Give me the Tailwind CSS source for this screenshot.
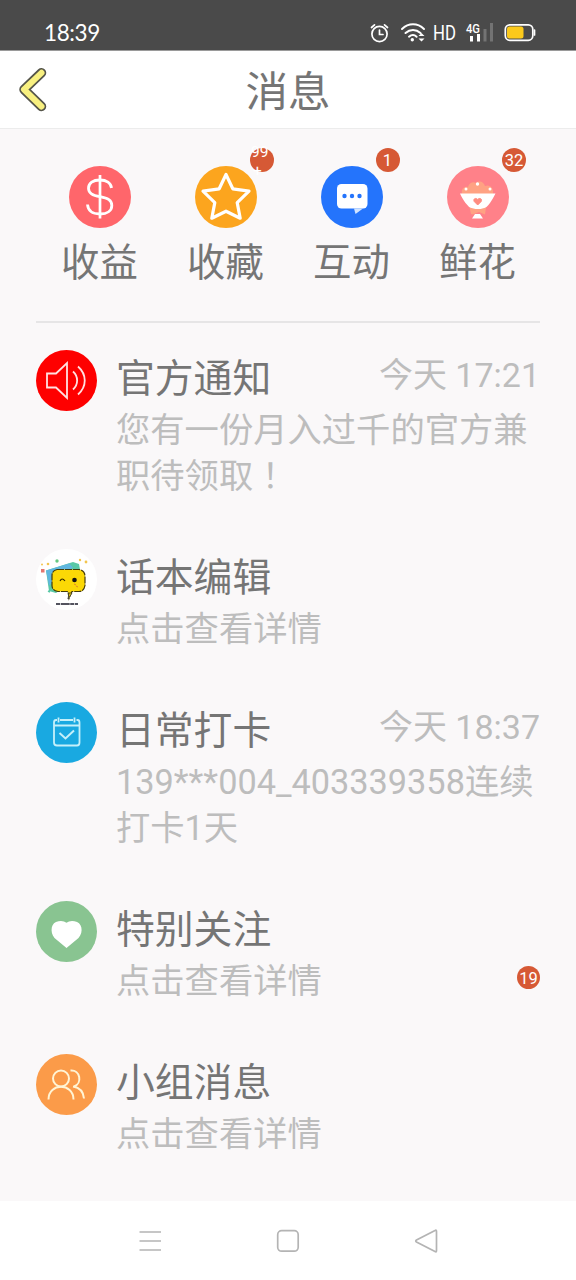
<!DOCTYPE html>
<html lang="zh-CN">
<head>
<meta charset="utf-8">
<meta name="viewport" content="width=device-width, initial-scale=1">
<title>消息</title>
<script src="https://cdn.jsdelivr.net/npm/@tailwindcss/browser@4"></script>
</head>
<body class="w-[576px] h-[1280px] overflow-hidden bg-[#faf8f9] font-['Roboto','Noto_Sans_CJK_SC',sans-serif] text-[#757575]">
<div class="flex h-[1280px] flex-col">

  <!-- Status bar -->
  <header class="flex h-[51px] shrink-0 items-end justify-between border-b border-[#9a9a9a] bg-[#4a4a4a] pl-[44px] pr-[40px] pb-[4px] text-white">
    <div class="font-['Lato','Roboto',sans-serif] text-[22.500px] leading-[26px] tracking-[-0.4px]">18:39</div>
    <svg class="h-[26px] w-[168px]" viewBox="368 20 168 26" fill="none" stroke="#fff" stroke-width="1.7" stroke-linecap="round">
      <circle cx="379.500" cy="34" r="7.600"/>
      <path d="M379.500 30v4.500h3.500M371.500 27.500l3-2.700M387.500 27.500l-3-2.700"/>
      <path d="M402 29c6.500-6.200 15.500-6.200 22 0M405.500 33c4.500-4 10.500-4 15 0M409 36.700c2.400-2 5.500-2 7.600 0" stroke-width="2"/>
      <circle cx="412.300" cy="39.700" r="1.700" fill="#fff" stroke="none"/>
      <path d="M418.500 36l3-3 3 3zM418.500 38.500l3 3 3-3z" fill="#fff" stroke="none"/>
      <text x="433" y="40" fill="#fff" stroke="none" font-family="Roboto" font-size="19.500" textLength="23" lengthAdjust="spacingAndGlyphs">HD</text>
      <text x="466" y="33" fill="#fff" stroke="none" font-family="Roboto" font-weight="500" font-size="12.500" textLength="14" lengthAdjust="spacingAndGlyphs">4G</text>
      <g fill="#fff" stroke="none">
        <rect x="470" y="36" width="3" height="5.500"/><rect x="477" y="34" width="3" height="7.500"/>
        <rect x="483.500" y="29" width="3" height="12.500" fill="#737373"/><rect x="490" y="23" width="3" height="18.500" fill="#737373"/>
      </g>
      <rect x="505.300" y="24.800" width="27.500" height="15.500" rx="4.500"/>
      <path d="M534.500 30v5"/>
      <rect x="507" y="26.500" width="16.500" height="12" rx="2.500" fill="#fbc91b" stroke="none"/>
    </svg>
  </header>

  <!-- Title bar -->
  <div class="grid h-[78px] shrink-0 grid-cols-[1fr_auto_1fr] items-center border-b border-[#ececec] bg-white">
    <svg class="ml-[18px] h-[46px] w-[30px]" viewBox="18 67 30 46" fill="none" stroke-linecap="round" stroke-linejoin="round">
      <path d="M41.500 72.800L24 89.500l17.500 17" stroke="#55554a" stroke-width="9.500"/>
      <path d="M41.500 72.800L24 89.500l17.500 17" stroke="#f8f080" stroke-width="6"/>
    </svg>
    <h1 class="pt-[7px] text-[42.500px] leading-[60px]">消息</h1>
  </div>

  <!-- Shortcuts and conversations -->
  <main class="flex grow flex-col px-9">
    <nav class="flex h-[194px] shrink-0 border-b-2 border-[#e6e5e6] pt-[37px] pl-[0.5px]">
      <div class="flex w-[126px] shrink-0 flex-col items-center">
        <svg class="size-[62px]" viewBox="0 0 62 62" fill="none" stroke="#fff"><circle cx="31" cy="31" r="31" fill="#ff666b" stroke="none"/><path d="M31 9v43.500" stroke-width="2.700"/><path d="M42.500 22c-.5-5-5-8-11.500-8-7 0-11.500 3-11.500 8.300 0 5 4 6.900 11.500 8.400 8 1.600 11.800 3.500 11.800 8.800 0 5.200-4.500 8.500-11.800 8.500-7.500 0-12-3.500-12.500-9.500" stroke-width="2.800"/></svg>
        <div class="mt-[7px] text-[38.400px] leading-[56px]">收益</div>
      </div>
      <div class="flex w-[126px] shrink-0 flex-col items-center">
        <div class="relative">
          <svg class="size-[62px]" viewBox="0 0 62 62"><circle cx="31" cy="31" r="31" fill="#fca51e"/><path d="M31 8.500l6.800 14.300 16.200 2.300-11.800 11.500 3 15.600L31 45.200l-14.200 7 3-15.600L8 25.100l16.200-2.300z" fill="none" stroke="#fff" stroke-width="3.200" stroke-linejoin="round"/></svg>
          <span class="absolute -top-[18px] left-[55.500px] size-6 rounded-full bg-[#d65935] text-[15.500px] leading-[19px] text-white"><span class="-mt-[5px] ml-px block">99<br><span class="ml-0.5">+</span></span></span>
        </div>
        <div class="mt-[7px] text-[38.400px] leading-[56px]">收藏</div>
      </div>
      <div class="flex w-[126px] shrink-0 flex-col items-center">
        <div class="relative">
          <svg class="size-[62px]" viewBox="0 0 62 62"><circle cx="31" cy="31" r="31" fill="#2474fc"/><rect x="16" y="18" width="30.500" height="24.500" rx="4.500" fill="#fff"/><path d="M33 42.500h9l-7.500 5.500z" fill="#d1e4ff"/><g fill="#2474fc"><circle cx="23.500" cy="30" r="2.200"/><circle cx="31" cy="30" r="2.200"/><circle cx="38.500" cy="30" r="2.200"/></g></svg>
          <span class="absolute -top-[18px] left-[55px] flex size-6 items-center justify-center rounded-full bg-[#d65935] pt-0.5 text-[16.500px] text-white">1</span>
        </div>
        <div class="mt-[7px] text-[38.400px] leading-[56px]">互动</div>
      </div>
      <div class="flex w-[126px] shrink-0 flex-col items-center">
        <div class="relative">
          <svg class="size-[62px]" viewBox="0 0 62 62"><circle cx="31" cy="31" r="31" fill="#ff8189"/><path d="M15 28c-1-5 2-8 6-7 1-4 5-6 8-4 3-3 8-1 9 3 5-2 9 2 8 8z" fill="#ffa283"/><g fill="#fff"><circle cx="30.500" cy="18" r="1.700"/><circle cx="19" cy="23" r="1.500"/><circle cx="43" cy="23" r="1.500"/><path d="M13 27.500h35.500c-3.500 7-7 13-12.500 16H25.500C20 40 16 34 13 27.500zM25 52.500l3-4.500h5l3 4.500z"/></g><path d="M30.700 39l-3.500-3.500c-1.500-3 2-4 3.500-2 1.500-2 5-1 3.500 2z" fill="#ff8c80" stroke="#ff8c80"/><path d="M22.500 41.500l6 1.500h5l5.500-1.500-1 7-6-2.500-6 2.500-2-.5z" fill="#ffa283"/></svg>
          <span class="absolute -top-[18px] left-[55.500px] flex size-6 items-center justify-center rounded-full bg-[#d65935] pt-0.5 text-[16.500px] text-white">32</span>
        </div>
        <div class="mt-[7px] text-[38.400px] leading-[56px]">鲜花</div>
      </div>
    </nav>

    <section class="flex flex-col gap-[50.500px] pt-[27px]">
      <article class="flex gap-[19px]">
        <svg class="size-[61px] shrink-0" viewBox="0 0 61 61" fill="none" stroke="#ffe1e1" stroke-width="1.800"><circle cx="30.500" cy="30.500" r="30.500" fill="#fe0000" stroke="none"/><path d="M11 23.500h9l11-10.500v35L20 37.500h-9z"/><path d="M37 21.500c5.500 5 5.500 13 0 18M42 16.500c9 8 9 20 0 28"/></svg>
        <div class="grow">
          <div class="flex h-[56.500px] items-start justify-between whitespace-nowrap"><h2 class="text-[38.800px] leading-[58px]">官方通知</h2><time class="text-[34px] leading-[51px] text-[#bdbdbd]">今天 17:21</time></div>
          <p class="whitespace-nowrap text-[34.300px] leading-[46px] text-[#bdbdbd]">您有一份月入过千的官方兼<br>职待领取<span class="font-['Noto_Sans_CJK_TC',sans-serif] leading-none" lang="zh-TW">！</span></p>
        </div>
      </article>

      <article class="flex gap-[19px]">
        <svg class="size-[61px] shrink-0" viewBox="0 0 61 61"><circle cx="30.500" cy="30.500" r="30.500" fill="#fff"/><path d="M10 21.500l27-8.500 6 2 2 11-25 18-7-2z" fill="#58c8a6"/><path d="M10 21.500l23-7 4 4-24 18z" fill="#60b6df"/><path d="M21 20.500h22q6 1 6 7v9q-1 6-6 6h-7l-3 7-1-7H22q-6-1-6-6v-10q0-5 5-6z" fill="#fbd806" stroke="#453b09" stroke-width="1.200" stroke-dasharray="7 1"/><path d="M33 44l-1 6 4-6z" fill="#fbd806" stroke="#333" stroke-width=".8"/><path d="M24 32q2-4 5 0" fill="none" stroke="#332b00" stroke-width="1.200"/><circle cx="38.500" cy="31" r="2.300" fill="#111"/><path d="M38 35l2 1M40 37l2 1" stroke="#e0852b"/><path d="M20 55h22" stroke="#1b1b2a" stroke-width="1.500" stroke-dasharray="4 .7 9 .5"/><g fill="#f3c54d"><circle cx="12" cy="15" r="1.300"/><circle cx="6" cy="15.500" r="1"/><circle cx="44" cy="11" r="1.200"/><circle cx="50" cy="13" r="1.400"/></g><circle cx="21" cy="12" r="1.700" fill="#66c982"/><rect x="5" y="20" width="3.500" height="3.500" fill="#e3766f"/><path d="M12 42l2 1" stroke="#58c8a6" stroke-width="1.500"/></svg>
        <div class="grow">
          <h2 class="h-[56.500px] text-[38.800px] leading-[58px]">话本编辑</h2>
          <p class="text-[34.300px] leading-[46px] text-[#bdbdbd]">点击查看详情</p>
        </div>
      </article>

      <article class="flex gap-[19px]">
        <svg class="size-[61px] shrink-0" viewBox="0 0 61 61" fill="none" stroke="#c5f0fa" stroke-width="1.800"><circle cx="30.500" cy="30.500" r="30.500" fill="#19a9e1" stroke="none"/><path d="M24 18h13M21 18h-1q-2 0-2 2.500v20q0 3 3 3h20q2.500 0 2.500-3v-20q0-2.500-2-2.500h-1M18 23.500h25.500M22.500 15.500v5M38.500 15.500v5"/><path d="M23.500 31l6 5.500 8.500-8" stroke-width="2"/></svg>
        <div class="grow">
          <div class="flex h-[56.500px] items-start justify-between whitespace-nowrap"><h2 class="text-[38.800px] leading-[58px]">日常打卡</h2><time class="text-[34px] leading-[50px] text-[#bdbdbd]">今天 18:37</time></div>
          <p class="whitespace-nowrap text-[34.300px] leading-[46px] text-[#bdbdbd]">139***004_403339358连续<br>打卡1天</p>
        </div>
      </article>

      <article class="flex gap-[19px]">
        <svg class="size-[61px] shrink-0" viewBox="0 0 61 61"><circle cx="30.500" cy="30.500" r="30.500" fill="#89c491"/><path d="M30.500 47L18.500 37C13.500 31 15 21 22.500 20.300q5-.8 8 1.500 3-2.300 8-1.500c7.500.7 9.500 10.700 4 16.700z" fill="#fff"/></svg>
        <div class="grow">
          <h2 class="h-[56.500px] text-[38.800px] leading-[58px]">特别关注</h2>
          <div class="flex items-center justify-between text-[34.300px] leading-[46px] text-[#bdbdbd]"><p>点击查看详情</p><span class="mb-1.5 flex size-[23px] items-center justify-center rounded-full bg-[#d65935] pt-0.5 text-[16.500px] text-white">19</span></div>
        </div>
      </article>

      <article class="flex gap-[19px]">
        <svg class="size-[61px] shrink-0" viewBox="0 0 61 61" fill="none" stroke="#fff4d4" stroke-width="2"><circle cx="30.500" cy="30.500" r="30.500" fill="#fb9b49" stroke="none"/><circle cx="25" cy="24.500" r="8"/><path d="M12.500 45.500c0-17 25-17 25 0M34.500 16.500c10-1 12 13 3.500 16M37 32.500c6 1 10.500 5 11 12"/></svg>
        <div class="grow">
          <h2 class="h-[56.500px] text-[38.800px] leading-[58px]">小组消息</h2>
          <p class="text-[34.300px] leading-[46px] text-[#bdbdbd]">点击查看详情</p>
        </div>
      </article>
    </section>
  </main>

  <!-- System navigation -->
  <footer class="flex h-[79px] shrink-0 items-center justify-between bg-white px-[138px]">
    <svg class="size-6" viewBox="0 0 24 24" stroke="#b4b4b4" stroke-width="1.700"><path d="M1.500 3H23M1.500 12H23M1.500 21H23"/></svg>
    <svg class="size-6" viewBox="0 0 24 24" fill="none" stroke="#b4b4b4" stroke-width="1.700"><rect x="1.700" y="1.700" width="20.500" height="20.500" rx="4"/></svg>
    <svg class="size-6" viewBox="0 0 24 24" fill="none" stroke="#b4b4b4" stroke-width="1.700"><path d="M21 1.500Q22.500 .5 22.500 2.500v19q0 2-1.500 1L2.500 13q-1.500-1 0-2z"/></svg>
  </footer>
</div>
</body>
</html>
